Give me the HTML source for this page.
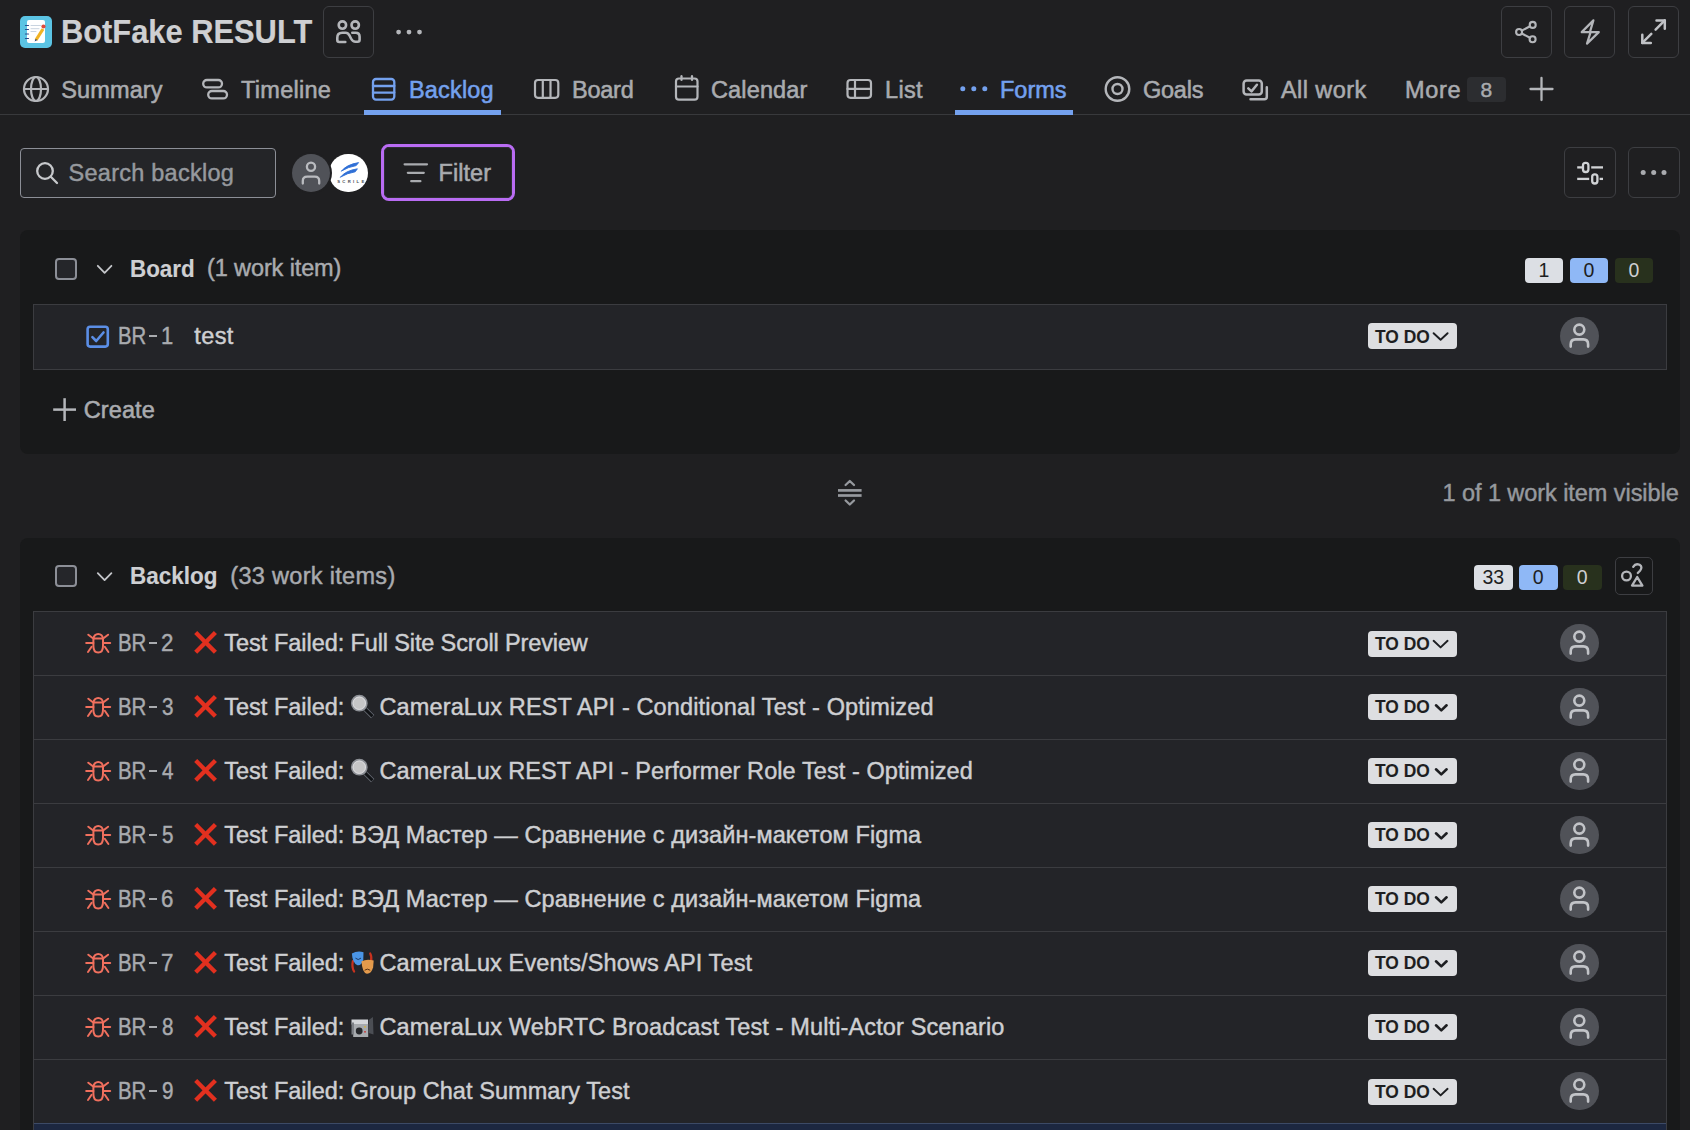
<!DOCTYPE html><html><head><meta charset="utf-8"><style>
html,body{margin:0;padding:0}
body{width:1690px;height:1130px;overflow:hidden;position:relative;background:#1f1f21;font-family:"Liberation Sans",sans-serif}
.t{position:absolute;white-space:nowrap}
.ov{position:absolute;left:0;top:0;overflow:visible}
</style></head><body>
<div style="position:absolute;left:20px;top:16px;width:32px;height:32px;box-sizing:border-box;background:#5bc4e4;border-radius:5px"></div>
<div style="position:absolute;left:27px;top:20px;width:18px;height:23px;box-sizing:border-box;background:#fff;border-radius:2px"></div>
<svg class="ov" width="1690" height="1130" viewBox="0 0 1690 1130" fill="none" stroke="#b4b6ba" stroke-width="1" stroke-linecap="round" stroke-linejoin="round"><g stroke="#2d4a8a" stroke-width="1.2"><line x1="25.5" y1="25.5" x2="28.5" y2="25.5"/><line x1="25.5" y1="29.5" x2="28.5" y2="29.5"/><line x1="25.5" y1="34" x2="28.5" y2="34"/><line x1="25.5" y1="38.5" x2="28.5" y2="38.5"/></g>
<g stroke="#c9d4e0" stroke-width="1"><line x1="31" y1="25.5" x2="41" y2="25.5"/><line x1="31" y1="28.7" x2="39" y2="28.7"/><line x1="31" y1="31.5" x2="36" y2="31.5"/></g>
<line x1="36" y1="40" x2="43" y2="29" stroke="#f2b322" stroke-width="3.2" stroke-linecap="butt"/>
<circle cx="43.5" cy="26.5" r="2.1" fill="#e04b3c" stroke="none"/>
<path d="M34.6 41.5 L35.6 38.9 L37.3 40 Z" fill="#203a70" stroke="none"/></svg>
<div class="t" style="left:61.19px;top:14.42px;font-size:34px;line-height:34px;font-weight:bold;color:#cecfd2;-webkit-text-stroke:0.2px currentColor;transform:scaleX(0.9069);transform-origin:0 0;">BotFake RESULT</div>
<div style="position:absolute;left:323px;top:6px;width:51px;height:52px;box-sizing:border-box;border:1px solid #3d3e42;border-radius:6px"></div>
<svg class="ov" width="1690" height="1130" viewBox="0 0 1690 1130" fill="none" stroke="#b4b6ba" stroke-width="2.6" stroke-linecap="round" stroke-linejoin="round"><circle cx="342.4" cy="25.1" r="3.7"/><circle cx="355.2" cy="25.1" r="3.7"/>
<path d="M345.3 42 H339.3 Q337.3 42 337.3 40 V37.8 Q337.3 32.8 342.3 32.8 H345.6 Q348 32.8 349.5 35.5 L351 38.5 Q352.8 41.8 355.5 41.8 H357.6 Q359.6 41.8 359.6 39.8 V36.8 Q359.6 32.8 355.6 32.8 H352.3"/></svg>
<svg class="ov" width="1690" height="1130" viewBox="0 0 1690 1130" fill="#b4b6ba" stroke="none" stroke-width="2.2" stroke-linecap="round" stroke-linejoin="round"><circle cx="398.6" cy="32.1" r="2.4"/><circle cx="409" cy="32.1" r="2.4"/><circle cx="419.5" cy="32.1" r="2.4"/></svg>
<div style="position:absolute;left:1501px;top:6px;width:51px;height:52px;box-sizing:border-box;border:1px solid #3d3e42;border-radius:6px"></div>
<div style="position:absolute;left:1564px;top:6px;width:51px;height:52px;box-sizing:border-box;border:1px solid #3d3e42;border-radius:6px"></div>
<div style="position:absolute;left:1628px;top:6px;width:51px;height:52px;box-sizing:border-box;border:1px solid #3d3e42;border-radius:6px"></div>
<svg class="ov" width="1690" height="1130" viewBox="0 0 1690 1130" fill="none" stroke="#b4b6ba" stroke-width="2.1" stroke-linecap="round" stroke-linejoin="round"><circle cx="1519.1" cy="32" r="3.0"/><circle cx="1532.7" cy="24.9" r="3.0"/><circle cx="1532.6" cy="39.3" r="3.0"/>
<line x1="1521.8" y1="30.6" x2="1530" y2="26.3"/><line x1="1521.8" y1="33.5" x2="1529.9" y2="37.8"/></svg>
<svg class="ov" width="1690" height="1130" viewBox="0 0 1690 1130" fill="none" stroke="#b4b6ba" stroke-width="2.2" stroke-linecap="round" stroke-linejoin="round"><path d="M1593.4 20.4 L1581.7 32.1 L1590.6 32.1 L1587 43.6 L1598.8 32.1 L1589.9 32.1 Z"/></svg>
<svg class="ov" width="1690" height="1130" viewBox="0 0 1690 1130" fill="none" stroke="#c0c2c6" stroke-width="2.5" stroke-linecap="round" stroke-linejoin="round"><path d="M1656.5 20.4 H1664.8 V28.8"/><line x1="1664.8" y1="20.4" x2="1655.6" y2="29.6"/>
<path d="M1642.3 34.7 V42.9 H1650.8"/><line x1="1642.3" y1="42.9" x2="1651.3" y2="33.9"/></svg>
<div class="t" style="left:61.30px;top:79.31px;font-size:23.5px;line-height:23.5px;font-weight:normal;color:#a9abaf;-webkit-text-stroke:0.55px currentColor;letter-spacing:0.117px;">Summary</div>
<div class="t" style="left:241.00px;top:79.31px;font-size:23.5px;line-height:23.5px;font-weight:normal;color:#a9abaf;-webkit-text-stroke:0.55px currentColor;letter-spacing:0.286px;">Timeline</div>
<div class="t" style="left:409.00px;top:79.31px;font-size:23.5px;line-height:23.5px;font-weight:normal;color:#74a1ee;-webkit-text-stroke:0.55px currentColor;letter-spacing:0.167px;">Backlog</div>
<div class="t" style="left:572.00px;top:79.31px;font-size:23.5px;line-height:23.5px;font-weight:normal;color:#a9abaf;-webkit-text-stroke:0.55px currentColor;letter-spacing:-0.250px;">Board</div>
<div class="t" style="left:711.00px;top:79.31px;font-size:23.5px;line-height:23.5px;font-weight:normal;color:#a9abaf;-webkit-text-stroke:0.55px currentColor;letter-spacing:0.143px;">Calendar</div>
<div class="t" style="left:885.00px;top:79.31px;font-size:23.5px;line-height:23.5px;font-weight:normal;color:#a9abaf;-webkit-text-stroke:0.55px currentColor;letter-spacing:0.333px;">List</div>
<div class="t" style="left:1000.00px;top:79.31px;font-size:23.5px;line-height:23.5px;font-weight:normal;color:#74a1ee;-webkit-text-stroke:0.55px currentColor;letter-spacing:0.000px;">Forms</div>
<div class="t" style="left:1143.00px;top:79.31px;font-size:23.5px;line-height:23.5px;font-weight:normal;color:#a9abaf;-webkit-text-stroke:0.55px currentColor;letter-spacing:-0.250px;">Goals</div>
<div class="t" style="left:1281.00px;top:79.31px;font-size:23.5px;line-height:23.5px;font-weight:normal;color:#a9abaf;-webkit-text-stroke:0.55px currentColor;letter-spacing:0.429px;">All work</div>
<div class="t" style="left:1405.00px;top:79.31px;font-size:23.5px;line-height:23.5px;font-weight:normal;color:#a9abaf;-webkit-text-stroke:0.55px currentColor;letter-spacing:0.667px;">More</div>
<svg class="ov" width="1690" height="1130" viewBox="0 0 1690 1130" fill="none" stroke="#b4b6ba" stroke-width="2.2" stroke-linecap="round" stroke-linejoin="round"><circle cx="36" cy="89" r="12"/><ellipse cx="36" cy="89" rx="5" ry="12"/><line x1="24" y1="89" x2="48" y2="89"/></svg>
<svg class="ov" width="1690" height="1130" viewBox="0 0 1690 1130" fill="none" stroke="#b4b6ba" stroke-width="2.3" stroke-linecap="round" stroke-linejoin="round"><rect x="203.2" y="80" width="18.8" height="7.4" rx="3.7"/><rect x="208.2" y="91" width="18.8" height="7.4" rx="3.7"/></svg>
<svg class="ov" width="1690" height="1130" viewBox="0 0 1690 1130" fill="none" stroke="#74a1ee" stroke-width="2.3" stroke-linecap="round" stroke-linejoin="round"><rect x="373" y="79" width="21.3" height="20.6" rx="3"/><line x1="373" y1="86" x2="394.3" y2="86"/><line x1="373" y1="92.6" x2="394.3" y2="92.6"/></svg>
<svg class="ov" width="1690" height="1130" viewBox="0 0 1690 1130" fill="none" stroke="#b4b6ba" stroke-width="2.2" stroke-linecap="round" stroke-linejoin="round"><rect x="535" y="80" width="23.3" height="17.8" rx="3"/><line x1="542.8" y1="80" x2="542.8" y2="97.8"/><line x1="550.5" y1="80" x2="550.5" y2="97.8"/></svg>
<svg class="ov" width="1690" height="1130" viewBox="0 0 1690 1130" fill="none" stroke="#b4b6ba" stroke-width="2.2" stroke-linecap="round" stroke-linejoin="round"><rect x="676" y="78.5" width="21.5" height="21.2" rx="3"/><line x1="676" y1="86.5" x2="697.5" y2="86.5"/><line x1="681.5" y1="76.2" x2="681.5" y2="80"/><line x1="692" y1="76.2" x2="692" y2="80"/></svg>
<svg class="ov" width="1690" height="1130" viewBox="0 0 1690 1130" fill="none" stroke="#b4b6ba" stroke-width="2.2" stroke-linecap="round" stroke-linejoin="round"><rect x="847.5" y="80" width="23.5" height="17.8" rx="3"/><line x1="847.5" y1="88.9" x2="871" y2="88.9"/><line x1="855" y1="80" x2="855" y2="97.8"/></svg>
<svg class="ov" width="1690" height="1130" viewBox="0 0 1690 1130" fill="#74a1ee" stroke="none" stroke-width="2.2" stroke-linecap="round" stroke-linejoin="round"><circle cx="962.8" cy="88.8" r="2.5"/><circle cx="973.8" cy="88.8" r="2.5"/><circle cx="984.8" cy="88.8" r="2.5"/></svg>
<svg class="ov" width="1690" height="1130" viewBox="0 0 1690 1130" fill="none" stroke="#b4b6ba" stroke-width="2.4" stroke-linecap="round" stroke-linejoin="round"><circle cx="1117.5" cy="89" r="11.8"/><circle cx="1117.5" cy="89" r="5"/></svg>
<svg class="ov" width="1690" height="1130" viewBox="0 0 1690 1130" fill="none" stroke="#b4b6ba" stroke-width="2.5" stroke-linecap="round" stroke-linejoin="round"><rect x="1243.6" y="80.5" width="18.2" height="14" rx="3"/><path d="M1248.3 88.3 L1251.5 91.4 L1256.9 84.8"/><path d="M1266.8 87.2 V96.8 Q1266.8 99.3 1264.3 99.3 H1250.5"/></svg>
<div style="position:absolute;left:1467px;top:77px;width:39px;height:25px;box-sizing:border-box;background:#2c2d30;border-radius:4px"></div>
<div class="t" style="left:1480.40px;top:79.42px;font-size:21px;line-height:21px;font-weight:normal;color:#a9abaf;-webkit-text-stroke:0.45px currentColor;">8</div>
<svg class="ov" width="1690" height="1130" viewBox="0 0 1690 1130" fill="none" stroke="#b4b6ba" stroke-width="2.3" stroke-linecap="round" stroke-linejoin="round"><line x1="1541.5" y1="78" x2="1541.5" y2="100"/><line x1="1530.5" y1="89" x2="1552.5" y2="89"/></svg>
<div style="position:absolute;left:0px;top:114px;width:1690px;height:1px;box-sizing:border-box;background:#38393c"></div>
<div style="position:absolute;left:364px;top:110px;width:137px;height:5px;box-sizing:border-box;background:#74a1ee"></div>
<div style="position:absolute;left:955px;top:110px;width:118px;height:5px;box-sizing:border-box;background:#74a1ee"></div>
<div style="position:absolute;left:20px;top:148px;width:256px;height:50px;box-sizing:border-box;background:#242528;border:1px solid #8c8f97;border-radius:4px"></div>
<svg class="ov" width="1690" height="1130" viewBox="0 0 1690 1130" fill="none" stroke="#c7c9cc" stroke-width="2.3" stroke-linecap="round" stroke-linejoin="round"><circle cx="45" cy="171" r="7.8"/><line x1="50.8" y1="176.8" x2="57" y2="183"/></svg>
<div class="t" style="left:68.60px;top:162.11px;font-size:23.5px;line-height:23.5px;font-weight:normal;color:#96999e;-webkit-text-stroke:0.45px currentColor;letter-spacing:0.246px;">Search backlog</div>
<div style="position:absolute;left:329.35px;top:153.5px;width:38.5px;height:38.5px;border-radius:50%;background:#fff"></div>
<svg class="ov" width="1690" height="1130" viewBox="0 0 1690 1130" fill="none" stroke="#b4b6ba" stroke-width="1" stroke-linecap="round" stroke-linejoin="round"><path d="M341.6 170.9 Q346.5 164.6 358.6 162.6 L356.2 165.6 Q348.5 166.8 341.6 170.9 Z" fill="#2f6fd6" stroke="#2f6fd6" stroke-width="0.9"/>
<path d="M340.6 177 Q345.6 170.6 357.4 168.8 L355.2 171.8 Q347.5 173 340.6 177 Z" fill="#2f6fd6" stroke="#2f6fd6" stroke-width="0.9"/></svg>
<div style="position:absolute;left:337.2px;top:179.6px;font-family:'Liberation Sans';font-size:4.2px;line-height:4px;letter-spacing:2.35px;color:#4a4d55;font-weight:bold;white-space:nowrap">SCRILE</div>
<div style="position:absolute;left:289.8px;top:151.5px;width:42.5px;height:42.5px;border-radius:50%;background:#1f1f21"></div>
<div style="position:absolute;left:291.8px;top:153.5px;width:38.5px;height:38.5px;border-radius:50%;background:#505258"></div>
<svg class="ov" width="1690" height="1130" viewBox="0 0 1690 1130" fill="none" stroke="#b9bbbf" stroke-width="2.3" stroke-linecap="round" stroke-linejoin="round"><circle cx="311" cy="166.8" r="4.1"/><path d="M302.8 183.6 V181 Q302.8 176.6 307.2 176.6 H314.8 Q319.2 176.6 319.2 181 V183.6"/></svg>
<div style="position:absolute;left:381px;top:144px;width:134px;height:57px;box-sizing:border-box;border:3px solid #b96cf3;border-radius:8px"></div>
<div style="position:absolute;left:384px;top:147px;width:128px;height:51px;box-sizing:border-box;border:1px solid #2e2f33;border-radius:5px"></div>
<svg class="ov" width="1690" height="1130" viewBox="0 0 1690 1130" fill="none" stroke="#a9abaf" stroke-width="2.2" stroke-linecap="round" stroke-linejoin="round"><line x1="404.6" y1="164.3" x2="427" y2="164.3"/><line x1="407.8" y1="172.8" x2="423.8" y2="172.8"/><line x1="411.2" y1="181.2" x2="420.4" y2="181.2"/></svg>
<div class="t" style="left:438.50px;top:162.11px;font-size:23.5px;line-height:23.5px;font-weight:normal;color:#a9abaf;-webkit-text-stroke:0.55px currentColor;letter-spacing:0.060px;">Filter</div>
<div style="position:absolute;left:1564px;top:147px;width:52px;height:51px;box-sizing:border-box;border:1px solid #3d3e42;border-radius:6px"></div>
<div style="position:absolute;left:1628px;top:147px;width:52px;height:51px;box-sizing:border-box;border:1px solid #3d3e42;border-radius:6px"></div>
<svg class="ov" width="1690" height="1130" viewBox="0 0 1690 1130" fill="none" stroke="#d0d2d5" stroke-width="2.3" stroke-linecap="round" stroke-linejoin="round"><line x1="1577.2" y1="167.4" x2="1582.6" y2="167.4" stroke-linecap="butt"/><line x1="1591.2" y1="167.4" x2="1603" y2="167.4" stroke-linecap="butt"/><rect x="1583" y="162.8" width="5.4" height="9.2" rx="2.5"/>
<line x1="1577.2" y1="178.9" x2="1589.2" y2="178.9" stroke-linecap="butt"/><line x1="1599.6" y1="178.9" x2="1603" y2="178.9" stroke-linecap="butt"/><rect x="1592.2" y="174.3" width="5.2" height="9.2" rx="2.5"/></svg>
<svg class="ov" width="1690" height="1130" viewBox="0 0 1690 1130" fill="#a9abaf" stroke="none" stroke-width="2.2" stroke-linecap="round" stroke-linejoin="round"><circle cx="1643.2" cy="172.5" r="2.5"/><circle cx="1653.7" cy="172.5" r="2.5"/><circle cx="1664" cy="172.5" r="2.5"/></svg>
<div style="position:absolute;left:20px;top:230px;width:1660px;height:224px;box-sizing:border-box;background:#18191a;border-radius:8px"></div>
<div style="position:absolute;left:55px;top:258px;width:22px;height:22px;box-sizing:border-box;background:#25262a;border:2px solid #8c8f97;border-radius:4px"></div>
<svg class="ov" width="1690" height="1130" viewBox="0 0 1690 1130" fill="none" stroke="#c4c6ca" stroke-width="1.8" stroke-linecap="round" stroke-linejoin="round"><path d="M97.8 265.8 L104.6 272.8 L111.4 265.8"/></svg>
<div class="t" style="left:129.54px;top:257.88px;font-size:23.3px;line-height:23.3px;font-weight:bold;color:#cecfd2;-webkit-text-stroke:0.15px currentColor;transform:scaleX(0.9615);transform-origin:0 0;">Board</div>
<div class="t" style="left:207.00px;top:257.31px;font-size:23.5px;line-height:23.5px;font-weight:normal;color:#a9abaf;-webkit-text-stroke:0.45px currentColor;letter-spacing:-0.117px;">(1 work item)</div>
<div style="position:absolute;left:1525px;top:258px;width:38px;height:25px;box-sizing:border-box;background:#dcdfe4;border-radius:4px"></div>
<div class="t" style="left:1525px;top:258px;width:38px;height:25px;line-height:25px;text-align:center;font-size:19.5px;color:#1d1e21">1</div>
<div style="position:absolute;left:1570px;top:258px;width:38px;height:25px;box-sizing:border-box;background:#8fb8f6;border-radius:4px"></div>
<div class="t" style="left:1570px;top:258px;width:38px;height:25px;line-height:25px;text-align:center;font-size:19.5px;color:#1d1e21">0</div>
<div style="position:absolute;left:1615px;top:258px;width:38px;height:25px;box-sizing:border-box;background:#28311d;border-radius:4px"></div>
<div class="t" style="left:1615px;top:258px;width:38px;height:25px;line-height:25px;text-align:center;font-size:19.5px;color:#cecfd2">0</div>
<div style="position:absolute;left:33px;top:304px;width:1634px;height:66px;box-sizing:border-box;background:#232428;border:1px solid #3b3c40"></div>
<svg class="ov" width="1690" height="1130" viewBox="0 0 1690 1130" fill="none" stroke="#5b8ee6" stroke-width="2.6" stroke-linecap="round" stroke-linejoin="round"><rect x="87.6" y="326.8" width="20.2" height="19.8" rx="2.5"/><path d="M92.4 337.2 L96.2 341 L103.5 332.5"/></svg>
<div class="t" style="left:117.89px;top:325.11px;font-size:23.5px;line-height:23.5px;font-weight:normal;color:#a9abaf;-webkit-text-stroke:0.45px currentColor;transform:scaleX(0.8629);transform-origin:0 0;">BR</div>
<div style="position:absolute;left:149px;top:334.7px;width:8px;height:2.5px;box-sizing:border-box;background:#a9abaf"></div>
<div class="t" style="left:161.27px;top:325.11px;font-size:23.5px;line-height:23.5px;font-weight:normal;color:#a9abaf;-webkit-text-stroke:0.45px currentColor;transform:scaleX(0.9333);transform-origin:0 0;">1</div>
<div class="t" style="left:194.30px;top:325.11px;font-size:23.5px;line-height:23.5px;font-weight:normal;color:#cecfd2;-webkit-text-stroke:0.45px currentColor;letter-spacing:0.367px;">test</div>
<div style="position:absolute;left:1368px;top:323.2px;width:89px;height:25.8px;box-sizing:border-box;background:#dddee1;border-radius:4px"></div>
<div class="t" style="left:1375.20px;top:327.68px;font-size:18.1px;line-height:18.1px;font-weight:bold;color:#1d1e21;-webkit-text-stroke:0.1px currentColor;transform:scaleX(0.9614);transform-origin:0 0;">TO DO</div>
<svg class="ov" width="1690" height="1130" viewBox="0 0 1690 1130" fill="none" stroke="#1d1e21" stroke-width="1.9" stroke-linecap="round" stroke-linejoin="round"><path d="M1433.6 333.2 L1440.6 339.8 L1447.6 333.2"/></svg>
<div style="position:absolute;left:1560.3px;top:316.8px;width:38.4px;height:38.4px;box-sizing:border-box;background:#505258;border-radius:50%"></div>
<svg class="ov" width="1690" height="1130" viewBox="0 0 1690 1130" fill="none" stroke="#c2c4c8" stroke-width="2.6" stroke-linecap="round" stroke-linejoin="round"><circle cx="1579.3" cy="329.6" r="5"/><path d="M1570.7 346.6 V344.2 Q1570.7 339.4 1575.5 339.4 H1583.3 Q1588.1 339.4 1588.1 344.2 V346.6"/></svg>
<svg class="ov" width="1690" height="1130" viewBox="0 0 1690 1130" fill="none" stroke="#b4b6ba" stroke-width="2.5" stroke-linecap="round" stroke-linejoin="round"><line x1="64.6" y1="398.2" x2="64.6" y2="421" stroke-linecap="butt"/><line x1="53.2" y1="409.6" x2="76" y2="409.6" stroke-linecap="butt"/></svg>
<div class="t" style="left:83.70px;top:399.11px;font-size:23.5px;line-height:23.5px;font-weight:normal;color:#a9abaf;-webkit-text-stroke:0.55px currentColor;letter-spacing:0.120px;">Create</div>
<svg class="ov" width="1690" height="1130" viewBox="0 0 1690 1130" fill="none" stroke="#96999e" stroke-width="2.7" stroke-linecap="round" stroke-linejoin="round"><line x1="838" y1="490.4" x2="861.6" y2="490.4" stroke-linecap="butt"/><line x1="838" y1="495.5" x2="861.6" y2="495.5" stroke-linecap="butt"/><path d="M845.6 485 L849.8 481 L854 485" stroke-width="2.3"/><path d="M845.6 500.5 L849.8 504.5 L854 500.5" stroke-width="2.3"/></svg>
<div class="t" style="left:1442.50px;top:481.91px;font-size:23.5px;line-height:23.5px;font-weight:normal;color:#96999e;-webkit-text-stroke:0.45px currentColor;letter-spacing:-0.065px;">1 of 1 work item visible</div>
<div style="position:absolute;left:20px;top:538px;width:1660px;height:700px;box-sizing:border-box;background:#18191a;border-radius:8px"></div>
<div style="position:absolute;left:55px;top:565.3px;width:22px;height:22px;box-sizing:border-box;background:#25262a;border:2px solid #8c8f97;border-radius:4px"></div>
<svg class="ov" width="1690" height="1130" viewBox="0 0 1690 1130" fill="none" stroke="#c4c6ca" stroke-width="1.8" stroke-linecap="round" stroke-linejoin="round"><path d="M97.8 573.0999999999999 L104.6 580.0999999999999 L111.4 573.0999999999999"/></svg>
<div class="t" style="left:129.73px;top:565.18px;font-size:23.3px;line-height:23.3px;font-weight:bold;color:#cecfd2;-webkit-text-stroke:0.15px currentColor;transform:scaleX(0.9652);transform-origin:0 0;">Backlog</div>
<div class="t" style="left:230.30px;top:564.61px;font-size:23.5px;line-height:23.5px;font-weight:normal;color:#a9abaf;-webkit-text-stroke:0.45px currentColor;letter-spacing:0.307px;">(33 work items)</div>
<div style="position:absolute;left:1474px;top:565px;width:38.5px;height:25px;box-sizing:border-box;background:#dcdfe4;border-radius:4px"></div>
<div class="t" style="left:1474px;top:565px;width:38.5px;height:25px;line-height:25px;text-align:center;font-size:19.5px;color:#1d1e21">33</div>
<div style="position:absolute;left:1519px;top:565px;width:38.5px;height:25px;box-sizing:border-box;background:#8fb8f6;border-radius:4px"></div>
<div class="t" style="left:1519px;top:565px;width:38.5px;height:25px;line-height:25px;text-align:center;font-size:19.5px;color:#1d1e21">0</div>
<div style="position:absolute;left:1563px;top:565px;width:38.5px;height:25px;box-sizing:border-box;background:#28311d;border-radius:4px"></div>
<div class="t" style="left:1563px;top:565px;width:38.5px;height:25px;line-height:25px;text-align:center;font-size:19.5px;color:#cecfd2">0</div>
<div style="position:absolute;left:1615px;top:557px;width:38px;height:38px;box-sizing:border-box;border:1px solid #3d3e42;border-radius:5px"></div>
<svg class="ov" width="1690" height="1130" viewBox="0 0 1690 1130" fill="none" stroke="#b4b6ba" stroke-width="2.3" stroke-linecap="round" stroke-linejoin="round"><circle cx="1626.5" cy="576" r="4.4"/><path d="M1633.2 566.8 Q1635.5 563 1639.6 564.8 Q1643 567 1640 570.8 L1637.8 573"/><path d="M1637.2 577 L1642.4 585.6 H1632 Z"/></svg>
<div style="position:absolute;left:33px;top:611px;width:1634px;height:700px;box-sizing:border-box;background:#232428;border-left:1px solid #3b3c40;border-right:1px solid #3b3c40;border-top:1px solid #3b3c40"></div>
<svg class="ov" width="1690" height="1130" viewBox="0 0 1690 1130" fill="none" stroke="#f0705e" stroke-width="2.0" stroke-linecap="round" stroke-linejoin="round"><path d="M93.4 638.5 V646 C93.4 650.5 95.5 652.6 98.2 652.6 C100.9 652.6 103 650.5 103 646 V638.5 Z"/>
<path d="M93.6 638.5 A4.6 4.6 0 0 1 102.8 638.5"/>
<line x1="86.2" y1="643" x2="93.4" y2="643"/><line x1="103" y1="643" x2="110.2" y2="643"/>
<line x1="88.3" y1="634.7" x2="92.6" y2="638"/><line x1="108.1" y1="634.7" x2="103.8" y2="638"/>
<line x1="91.6" y1="646.8" x2="88" y2="652"/><line x1="104.8" y1="646.8" x2="108.4" y2="652"/></svg>
<div class="t" style="left:117.73px;top:632.11px;font-size:23.5px;line-height:23.5px;font-weight:normal;color:#a9abaf;-webkit-text-stroke:0.45px currentColor;transform:scaleX(0.8677);transform-origin:0 0;">BR</div>
<div style="position:absolute;left:149px;top:641.7px;width:8px;height:2.5px;box-sizing:border-box;background:#a9abaf"></div>
<div class="t" style="left:161.25px;top:632.11px;font-size:23.5px;line-height:23.5px;font-weight:normal;color:#a9abaf;-webkit-text-stroke:0.45px currentColor;transform:scaleX(0.9500);transform-origin:0 0;">2</div>
<svg class="ov" width="1690" height="1130" viewBox="0 0 1690 1130" fill="none" stroke="#e2301f" stroke-width="4.3" stroke-linecap="butt"><line x1="195.7" y1="632.5" x2="215.4" y2="652.3"/><line x1="215.4" y1="632.5" x2="195.7" y2="652.3"/></svg>
<div class="t" style="left:224.30px;top:632.11px;font-size:23.5px;line-height:23.5px;font-weight:normal;color:#cecfd2;-webkit-text-stroke:0.45px currentColor;letter-spacing:-0.009px;">Test Failed:</div>
<div class="t" style="left:350.50px;top:632.11px;font-size:23.5px;line-height:23.5px;font-weight:normal;color:#cecfd2;-webkit-text-stroke:0.45px currentColor;letter-spacing:-0.130px;">Full Site Scroll Preview</div>
<div style="position:absolute;left:1368px;top:630.8000000000001px;width:89px;height:25.8px;box-sizing:border-box;background:#dddee1;border-radius:4px"></div>
<div class="t" style="left:1375.20px;top:635.28px;font-size:18.1px;line-height:18.1px;font-weight:bold;color:#1d1e21;-webkit-text-stroke:0.1px currentColor;transform:scaleX(0.9614);transform-origin:0 0;">TO DO</div>
<svg class="ov" width="1690" height="1130" viewBox="0 0 1690 1130" fill="none" stroke="#1d1e21" stroke-width="1.9" stroke-linecap="round" stroke-linejoin="round"><path d="M1433.6 640.8000000000001 L1440.6 647.4 L1447.6 640.8000000000001"/></svg>
<div style="position:absolute;left:1560.3px;top:623.8px;width:38.4px;height:38.4px;box-sizing:border-box;background:#505258;border-radius:50%"></div>
<svg class="ov" width="1690" height="1130" viewBox="0 0 1690 1130" fill="none" stroke="#c2c4c8" stroke-width="2.6" stroke-linecap="round" stroke-linejoin="round"><circle cx="1579.3" cy="636.6" r="5"/><path d="M1570.7 653.6 V651.2 Q1570.7 646.4 1575.5 646.4 H1583.3 Q1588.1 646.4 1588.1 651.2 V653.6"/></svg>
<div style="position:absolute;left:34px;top:675px;width:1632px;height:1px;box-sizing:border-box;background:#3b3c40"></div>
<svg class="ov" width="1690" height="1130" viewBox="0 0 1690 1130" fill="none" stroke="#f0705e" stroke-width="2.0" stroke-linecap="round" stroke-linejoin="round"><path d="M93.4 702.5 V710 C93.4 714.5 95.5 716.6 98.2 716.6 C100.9 716.6 103 714.5 103 710 V702.5 Z"/>
<path d="M93.6 702.5 A4.6 4.6 0 0 1 102.8 702.5"/>
<line x1="86.2" y1="707" x2="93.4" y2="707"/><line x1="103" y1="707" x2="110.2" y2="707"/>
<line x1="88.3" y1="698.7" x2="92.6" y2="702"/><line x1="108.1" y1="698.7" x2="103.8" y2="702"/>
<line x1="91.6" y1="710.8" x2="88" y2="716"/><line x1="104.8" y1="710.8" x2="108.4" y2="716"/></svg>
<div class="t" style="left:117.73px;top:696.11px;font-size:23.5px;line-height:23.5px;font-weight:normal;color:#a9abaf;-webkit-text-stroke:0.45px currentColor;transform:scaleX(0.8677);transform-origin:0 0;">BR</div>
<div style="position:absolute;left:149px;top:705.7px;width:8px;height:2.5px;box-sizing:border-box;background:#a9abaf"></div>
<div class="t" style="left:162.20px;top:696.11px;font-size:23.5px;line-height:23.5px;font-weight:normal;color:#a9abaf;-webkit-text-stroke:0.45px currentColor;transform:scaleX(0.8769);transform-origin:0 0;">3</div>
<svg class="ov" width="1690" height="1130" viewBox="0 0 1690 1130" fill="none" stroke="#e2301f" stroke-width="4.3" stroke-linecap="butt"><line x1="195.7" y1="696.5" x2="215.4" y2="716.3"/><line x1="215.4" y1="696.5" x2="195.7" y2="716.3"/></svg>
<div class="t" style="left:224.30px;top:696.11px;font-size:23.5px;line-height:23.5px;font-weight:normal;color:#cecfd2;-webkit-text-stroke:0.45px currentColor;letter-spacing:-0.009px;">Test Failed:</div>
<svg class="ov" width="1690" height="1130" viewBox="0 0 1690 1130" fill="none" stroke="#b4b6ba" stroke-width="1" stroke-linecap="round" stroke-linejoin="round"><line x1="364.9" y1="708.8" x2="372.7" y2="716.6" stroke="#6b7078" stroke-width="4.6" stroke-linecap="butt"/><line x1="365.2" y1="709.1" x2="372.5" y2="716.4" stroke="#111316" stroke-width="3.0" stroke-linecap="butt"/><circle cx="359.3" cy="703.2" r="7.6" fill="#c6c6c7" stroke="#8d9096" stroke-width="1.6"/><circle cx="359.3" cy="703.2" r="6.2" fill="none" stroke="#dcdde0" stroke-width="0.9"/></svg>
<div class="t" style="left:379.50px;top:696.11px;font-size:23.5px;line-height:23.5px;font-weight:normal;color:#cecfd2;-webkit-text-stroke:0.45px currentColor;letter-spacing:0.131px;">CameraLux REST API - Conditional Test - Optimized</div>
<div style="position:absolute;left:1368px;top:694.0px;width:89px;height:25.8px;box-sizing:border-box;background:#dddee1;border-radius:4px"></div>
<div class="t" style="left:1375.20px;top:698.48px;font-size:18.1px;line-height:18.1px;font-weight:bold;color:#1d1e21;-webkit-text-stroke:0.1px currentColor;transform:scaleX(0.9614);transform-origin:0 0;">TO DO</div>
<svg class="ov" width="1690" height="1130" viewBox="0 0 1690 1130" fill="none" stroke="#1d1e21" stroke-width="2.6" stroke-linecap="round" stroke-linejoin="round"><path d="M1436 705.3 L1441.3 710.4 L1446.6 705.3"/></svg>
<div style="position:absolute;left:1560.3px;top:687.8px;width:38.4px;height:38.4px;box-sizing:border-box;background:#505258;border-radius:50%"></div>
<svg class="ov" width="1690" height="1130" viewBox="0 0 1690 1130" fill="none" stroke="#c2c4c8" stroke-width="2.6" stroke-linecap="round" stroke-linejoin="round"><circle cx="1579.3" cy="700.6" r="5"/><path d="M1570.7 717.6 V715.2 Q1570.7 710.4 1575.5 710.4 H1583.3 Q1588.1 710.4 1588.1 715.2 V717.6"/></svg>
<div style="position:absolute;left:34px;top:739px;width:1632px;height:1px;box-sizing:border-box;background:#3b3c40"></div>
<svg class="ov" width="1690" height="1130" viewBox="0 0 1690 1130" fill="none" stroke="#f0705e" stroke-width="2.0" stroke-linecap="round" stroke-linejoin="round"><path d="M93.4 766.5 V774 C93.4 778.5 95.5 780.6 98.2 780.6 C100.9 780.6 103 778.5 103 774 V766.5 Z"/>
<path d="M93.6 766.5 A4.6 4.6 0 0 1 102.8 766.5"/>
<line x1="86.2" y1="771" x2="93.4" y2="771"/><line x1="103" y1="771" x2="110.2" y2="771"/>
<line x1="88.3" y1="762.7" x2="92.6" y2="766"/><line x1="108.1" y1="762.7" x2="103.8" y2="766"/>
<line x1="91.6" y1="774.8" x2="88" y2="780"/><line x1="104.8" y1="774.8" x2="108.4" y2="780"/></svg>
<div class="t" style="left:117.73px;top:760.11px;font-size:23.5px;line-height:23.5px;font-weight:normal;color:#a9abaf;-webkit-text-stroke:0.45px currentColor;transform:scaleX(0.8677);transform-origin:0 0;">BR</div>
<div style="position:absolute;left:149px;top:769.7px;width:8px;height:2.5px;box-sizing:border-box;background:#a9abaf"></div>
<div class="t" style="left:162.20px;top:760.11px;font-size:23.5px;line-height:23.5px;font-weight:normal;color:#a9abaf;-webkit-text-stroke:0.45px currentColor;transform:scaleX(0.8769);transform-origin:0 0;">4</div>
<svg class="ov" width="1690" height="1130" viewBox="0 0 1690 1130" fill="none" stroke="#e2301f" stroke-width="4.3" stroke-linecap="butt"><line x1="195.7" y1="760.5" x2="215.4" y2="780.3"/><line x1="215.4" y1="760.5" x2="195.7" y2="780.3"/></svg>
<div class="t" style="left:224.30px;top:760.11px;font-size:23.5px;line-height:23.5px;font-weight:normal;color:#cecfd2;-webkit-text-stroke:0.45px currentColor;letter-spacing:-0.009px;">Test Failed:</div>
<svg class="ov" width="1690" height="1130" viewBox="0 0 1690 1130" fill="none" stroke="#b4b6ba" stroke-width="1" stroke-linecap="round" stroke-linejoin="round"><line x1="364.9" y1="772.8" x2="372.7" y2="780.6" stroke="#6b7078" stroke-width="4.6" stroke-linecap="butt"/><line x1="365.2" y1="773.1" x2="372.5" y2="780.4" stroke="#111316" stroke-width="3.0" stroke-linecap="butt"/><circle cx="359.3" cy="767.2" r="7.6" fill="#c6c6c7" stroke="#8d9096" stroke-width="1.6"/><circle cx="359.3" cy="767.2" r="6.2" fill="none" stroke="#dcdde0" stroke-width="0.9"/></svg>
<div class="t" style="left:379.50px;top:760.11px;font-size:23.5px;line-height:23.5px;font-weight:normal;color:#cecfd2;-webkit-text-stroke:0.45px currentColor;letter-spacing:0.076px;">CameraLux REST API - Performer Role Test - Optimized</div>
<div style="position:absolute;left:1368px;top:758.0px;width:89px;height:25.8px;box-sizing:border-box;background:#dddee1;border-radius:4px"></div>
<div class="t" style="left:1375.20px;top:762.48px;font-size:18.1px;line-height:18.1px;font-weight:bold;color:#1d1e21;-webkit-text-stroke:0.1px currentColor;transform:scaleX(0.9614);transform-origin:0 0;">TO DO</div>
<svg class="ov" width="1690" height="1130" viewBox="0 0 1690 1130" fill="none" stroke="#1d1e21" stroke-width="2.6" stroke-linecap="round" stroke-linejoin="round"><path d="M1436 769.3 L1441.3 774.4 L1446.6 769.3"/></svg>
<div style="position:absolute;left:1560.3px;top:751.8px;width:38.4px;height:38.4px;box-sizing:border-box;background:#505258;border-radius:50%"></div>
<svg class="ov" width="1690" height="1130" viewBox="0 0 1690 1130" fill="none" stroke="#c2c4c8" stroke-width="2.6" stroke-linecap="round" stroke-linejoin="round"><circle cx="1579.3" cy="764.6" r="5"/><path d="M1570.7 781.6 V779.2 Q1570.7 774.4 1575.5 774.4 H1583.3 Q1588.1 774.4 1588.1 779.2 V781.6"/></svg>
<div style="position:absolute;left:34px;top:803px;width:1632px;height:1px;box-sizing:border-box;background:#3b3c40"></div>
<svg class="ov" width="1690" height="1130" viewBox="0 0 1690 1130" fill="none" stroke="#f0705e" stroke-width="2.0" stroke-linecap="round" stroke-linejoin="round"><path d="M93.4 830.5 V838 C93.4 842.5 95.5 844.6 98.2 844.6 C100.9 844.6 103 842.5 103 838 V830.5 Z"/>
<path d="M93.6 830.5 A4.6 4.6 0 0 1 102.8 830.5"/>
<line x1="86.2" y1="835" x2="93.4" y2="835"/><line x1="103" y1="835" x2="110.2" y2="835"/>
<line x1="88.3" y1="826.7" x2="92.6" y2="830"/><line x1="108.1" y1="826.7" x2="103.8" y2="830"/>
<line x1="91.6" y1="838.8" x2="88" y2="844"/><line x1="104.8" y1="838.8" x2="108.4" y2="844"/></svg>
<div class="t" style="left:117.73px;top:824.11px;font-size:23.5px;line-height:23.5px;font-weight:normal;color:#a9abaf;-webkit-text-stroke:0.45px currentColor;transform:scaleX(0.8677);transform-origin:0 0;">BR</div>
<div style="position:absolute;left:149px;top:833.7px;width:8px;height:2.5px;box-sizing:border-box;background:#a9abaf"></div>
<div class="t" style="left:162.20px;top:824.11px;font-size:23.5px;line-height:23.5px;font-weight:normal;color:#a9abaf;-webkit-text-stroke:0.45px currentColor;transform:scaleX(0.8769);transform-origin:0 0;">5</div>
<svg class="ov" width="1690" height="1130" viewBox="0 0 1690 1130" fill="none" stroke="#e2301f" stroke-width="4.3" stroke-linecap="butt"><line x1="195.7" y1="824.5" x2="215.4" y2="844.3"/><line x1="215.4" y1="824.5" x2="195.7" y2="844.3"/></svg>
<div class="t" style="left:224.30px;top:824.11px;font-size:23.5px;line-height:23.5px;font-weight:normal;color:#cecfd2;-webkit-text-stroke:0.45px currentColor;letter-spacing:-0.009px;">Test Failed:</div>
<div class="t" style="left:351.20px;top:824.11px;font-size:23.5px;line-height:23.5px;font-weight:normal;color:#cecfd2;-webkit-text-stroke:0.45px currentColor;letter-spacing:0.091px;">ВЭД Мастер — Сравнение с дизайн-макетом Figma</div>
<div style="position:absolute;left:1368px;top:822.0px;width:89px;height:25.8px;box-sizing:border-box;background:#dddee1;border-radius:4px"></div>
<div class="t" style="left:1375.20px;top:826.48px;font-size:18.1px;line-height:18.1px;font-weight:bold;color:#1d1e21;-webkit-text-stroke:0.1px currentColor;transform:scaleX(0.9614);transform-origin:0 0;">TO DO</div>
<svg class="ov" width="1690" height="1130" viewBox="0 0 1690 1130" fill="none" stroke="#1d1e21" stroke-width="2.6" stroke-linecap="round" stroke-linejoin="round"><path d="M1436 833.3 L1441.3 838.4 L1446.6 833.3"/></svg>
<div style="position:absolute;left:1560.3px;top:815.8px;width:38.4px;height:38.4px;box-sizing:border-box;background:#505258;border-radius:50%"></div>
<svg class="ov" width="1690" height="1130" viewBox="0 0 1690 1130" fill="none" stroke="#c2c4c8" stroke-width="2.6" stroke-linecap="round" stroke-linejoin="round"><circle cx="1579.3" cy="828.6" r="5"/><path d="M1570.7 845.6 V843.2 Q1570.7 838.4 1575.5 838.4 H1583.3 Q1588.1 838.4 1588.1 843.2 V845.6"/></svg>
<div style="position:absolute;left:34px;top:867px;width:1632px;height:1px;box-sizing:border-box;background:#3b3c40"></div>
<svg class="ov" width="1690" height="1130" viewBox="0 0 1690 1130" fill="none" stroke="#f0705e" stroke-width="2.0" stroke-linecap="round" stroke-linejoin="round"><path d="M93.4 894.5 V902 C93.4 906.5 95.5 908.6 98.2 908.6 C100.9 908.6 103 906.5 103 902 V894.5 Z"/>
<path d="M93.6 894.5 A4.6 4.6 0 0 1 102.8 894.5"/>
<line x1="86.2" y1="899" x2="93.4" y2="899"/><line x1="103" y1="899" x2="110.2" y2="899"/>
<line x1="88.3" y1="890.7" x2="92.6" y2="894"/><line x1="108.1" y1="890.7" x2="103.8" y2="894"/>
<line x1="91.6" y1="902.8" x2="88" y2="908"/><line x1="104.8" y1="902.8" x2="108.4" y2="908"/></svg>
<div class="t" style="left:117.73px;top:888.11px;font-size:23.5px;line-height:23.5px;font-weight:normal;color:#a9abaf;-webkit-text-stroke:0.45px currentColor;transform:scaleX(0.8677);transform-origin:0 0;">BR</div>
<div style="position:absolute;left:149px;top:897.7px;width:8px;height:2.5px;box-sizing:border-box;background:#a9abaf"></div>
<div class="t" style="left:161.25px;top:888.11px;font-size:23.5px;line-height:23.5px;font-weight:normal;color:#a9abaf;-webkit-text-stroke:0.45px currentColor;transform:scaleX(0.9500);transform-origin:0 0;">6</div>
<svg class="ov" width="1690" height="1130" viewBox="0 0 1690 1130" fill="none" stroke="#e2301f" stroke-width="4.3" stroke-linecap="butt"><line x1="195.7" y1="888.5" x2="215.4" y2="908.3"/><line x1="215.4" y1="888.5" x2="195.7" y2="908.3"/></svg>
<div class="t" style="left:224.30px;top:888.11px;font-size:23.5px;line-height:23.5px;font-weight:normal;color:#cecfd2;-webkit-text-stroke:0.45px currentColor;letter-spacing:-0.009px;">Test Failed:</div>
<div class="t" style="left:351.20px;top:888.11px;font-size:23.5px;line-height:23.5px;font-weight:normal;color:#cecfd2;-webkit-text-stroke:0.45px currentColor;letter-spacing:0.091px;">ВЭД Мастер — Сравнение с дизайн-макетом Figma</div>
<div style="position:absolute;left:1368px;top:886.0px;width:89px;height:25.8px;box-sizing:border-box;background:#dddee1;border-radius:4px"></div>
<div class="t" style="left:1375.20px;top:890.48px;font-size:18.1px;line-height:18.1px;font-weight:bold;color:#1d1e21;-webkit-text-stroke:0.1px currentColor;transform:scaleX(0.9614);transform-origin:0 0;">TO DO</div>
<svg class="ov" width="1690" height="1130" viewBox="0 0 1690 1130" fill="none" stroke="#1d1e21" stroke-width="2.6" stroke-linecap="round" stroke-linejoin="round"><path d="M1436 897.3 L1441.3 902.4 L1446.6 897.3"/></svg>
<div style="position:absolute;left:1560.3px;top:879.8px;width:38.4px;height:38.4px;box-sizing:border-box;background:#505258;border-radius:50%"></div>
<svg class="ov" width="1690" height="1130" viewBox="0 0 1690 1130" fill="none" stroke="#c2c4c8" stroke-width="2.6" stroke-linecap="round" stroke-linejoin="round"><circle cx="1579.3" cy="892.6" r="5"/><path d="M1570.7 909.6 V907.2 Q1570.7 902.4 1575.5 902.4 H1583.3 Q1588.1 902.4 1588.1 907.2 V909.6"/></svg>
<div style="position:absolute;left:34px;top:931px;width:1632px;height:1px;box-sizing:border-box;background:#3b3c40"></div>
<svg class="ov" width="1690" height="1130" viewBox="0 0 1690 1130" fill="none" stroke="#f0705e" stroke-width="2.0" stroke-linecap="round" stroke-linejoin="round"><path d="M93.4 958.5 V966 C93.4 970.5 95.5 972.6 98.2 972.6 C100.9 972.6 103 970.5 103 966 V958.5 Z"/>
<path d="M93.6 958.5 A4.6 4.6 0 0 1 102.8 958.5"/>
<line x1="86.2" y1="963" x2="93.4" y2="963"/><line x1="103" y1="963" x2="110.2" y2="963"/>
<line x1="88.3" y1="954.7" x2="92.6" y2="958"/><line x1="108.1" y1="954.7" x2="103.8" y2="958"/>
<line x1="91.6" y1="966.8" x2="88" y2="972"/><line x1="104.8" y1="966.8" x2="108.4" y2="972"/></svg>
<div class="t" style="left:117.73px;top:952.11px;font-size:23.5px;line-height:23.5px;font-weight:normal;color:#a9abaf;-webkit-text-stroke:0.45px currentColor;transform:scaleX(0.8677);transform-origin:0 0;">BR</div>
<div style="position:absolute;left:149px;top:961.7px;width:8px;height:2.5px;box-sizing:border-box;background:#a9abaf"></div>
<div class="t" style="left:161.25px;top:952.11px;font-size:23.5px;line-height:23.5px;font-weight:normal;color:#a9abaf;-webkit-text-stroke:0.45px currentColor;transform:scaleX(0.9500);transform-origin:0 0;">7</div>
<svg class="ov" width="1690" height="1130" viewBox="0 0 1690 1130" fill="none" stroke="#e2301f" stroke-width="4.3" stroke-linecap="butt"><line x1="195.7" y1="952.5" x2="215.4" y2="972.3"/><line x1="215.4" y1="952.5" x2="195.7" y2="972.3"/></svg>
<div class="t" style="left:224.30px;top:952.11px;font-size:23.5px;line-height:23.5px;font-weight:normal;color:#cecfd2;-webkit-text-stroke:0.45px currentColor;letter-spacing:-0.009px;">Test Failed:</div>
<svg class="ov" width="1690" height="1130" viewBox="0 0 1690 1130" fill="none" stroke="#b4b6ba" stroke-width="1" stroke-linecap="round" stroke-linejoin="round"><path d="M352.9 961 Q351.5 967 354.09999999999997 971.5" stroke="#c8321e" stroke-width="2.2"/><path d="M370.2 953.5 Q372.2 957 370.9 962" stroke="#c8321e" stroke-width="2.2"/><path d="M351.9 953.5 Q357.2 950.5 363.5 952.2 L363.3 959.5 Q361.7 965.8 357.5 965.2 Q352.5 963.5 351.9 953.5 Z" fill="#4a95e6" stroke="none"/><path d="M361.5 961.2 Q367.2 958.4 373.7 960.6 L373.09999999999997 967.6 Q371.2 974 366.9 973.8 Q362.09999999999997 972.5 361.5 961.2 Z" fill="#e39a4c" stroke="none"/><path d="M355.7 958.4 Q358.2 961 360.7 958.4" stroke="#1d3a66" stroke-width="1"/><path d="M364.9 970 Q367.3 968 369.9 970" stroke="#5a3214" stroke-width="1"/></svg>
<div class="t" style="left:379.50px;top:952.11px;font-size:23.5px;line-height:23.5px;font-weight:normal;color:#cecfd2;-webkit-text-stroke:0.45px currentColor;letter-spacing:0.110px;">CameraLux Events/Shows API Test</div>
<div style="position:absolute;left:1368px;top:950.0px;width:89px;height:25.8px;box-sizing:border-box;background:#dddee1;border-radius:4px"></div>
<div class="t" style="left:1375.20px;top:954.48px;font-size:18.1px;line-height:18.1px;font-weight:bold;color:#1d1e21;-webkit-text-stroke:0.1px currentColor;transform:scaleX(0.9614);transform-origin:0 0;">TO DO</div>
<svg class="ov" width="1690" height="1130" viewBox="0 0 1690 1130" fill="none" stroke="#1d1e21" stroke-width="2.6" stroke-linecap="round" stroke-linejoin="round"><path d="M1436 961.3 L1441.3 966.4 L1446.6 961.3"/></svg>
<div style="position:absolute;left:1560.3px;top:943.8px;width:38.4px;height:38.4px;box-sizing:border-box;background:#505258;border-radius:50%"></div>
<svg class="ov" width="1690" height="1130" viewBox="0 0 1690 1130" fill="none" stroke="#c2c4c8" stroke-width="2.6" stroke-linecap="round" stroke-linejoin="round"><circle cx="1579.3" cy="956.6" r="5"/><path d="M1570.7 973.6 V971.2 Q1570.7 966.4 1575.5 966.4 H1583.3 Q1588.1 966.4 1588.1 971.2 V973.6"/></svg>
<div style="position:absolute;left:34px;top:995px;width:1632px;height:1px;box-sizing:border-box;background:#3b3c40"></div>
<svg class="ov" width="1690" height="1130" viewBox="0 0 1690 1130" fill="none" stroke="#f0705e" stroke-width="2.0" stroke-linecap="round" stroke-linejoin="round"><path d="M93.4 1022.5 V1030 C93.4 1034.5 95.5 1036.6 98.2 1036.6 C100.9 1036.6 103 1034.5 103 1030 V1022.5 Z"/>
<path d="M93.6 1022.5 A4.6 4.6 0 0 1 102.8 1022.5"/>
<line x1="86.2" y1="1027" x2="93.4" y2="1027"/><line x1="103" y1="1027" x2="110.2" y2="1027"/>
<line x1="88.3" y1="1018.7" x2="92.6" y2="1022"/><line x1="108.1" y1="1018.7" x2="103.8" y2="1022"/>
<line x1="91.6" y1="1030.8" x2="88" y2="1036"/><line x1="104.8" y1="1030.8" x2="108.4" y2="1036"/></svg>
<div class="t" style="left:117.73px;top:1016.11px;font-size:23.5px;line-height:23.5px;font-weight:normal;color:#a9abaf;-webkit-text-stroke:0.45px currentColor;transform:scaleX(0.8677);transform-origin:0 0;">BR</div>
<div style="position:absolute;left:149px;top:1025.7px;width:8px;height:2.5px;box-sizing:border-box;background:#a9abaf"></div>
<div class="t" style="left:162.20px;top:1016.11px;font-size:23.5px;line-height:23.5px;font-weight:normal;color:#a9abaf;-webkit-text-stroke:0.45px currentColor;transform:scaleX(0.8769);transform-origin:0 0;">8</div>
<svg class="ov" width="1690" height="1130" viewBox="0 0 1690 1130" fill="none" stroke="#e2301f" stroke-width="4.3" stroke-linecap="butt"><line x1="195.7" y1="1016.5" x2="215.4" y2="1036.3"/><line x1="215.4" y1="1016.5" x2="195.7" y2="1036.3"/></svg>
<div class="t" style="left:224.30px;top:1016.11px;font-size:23.5px;line-height:23.5px;font-weight:normal;color:#cecfd2;-webkit-text-stroke:0.45px currentColor;letter-spacing:-0.009px;">Test Failed:</div>
<svg class="ov" width="1690" height="1130" viewBox="0 0 1690 1130" fill="none" stroke="#b4b6ba" stroke-width="1" stroke-linecap="round" stroke-linejoin="round"><rect x="351.5" y="1019.5" width="16.5" height="5" fill="#d4d6da" stroke="none"/><rect x="353.2" y="1024" width="15" height="13" fill="#a7aaae" stroke="none"/><rect x="351.5" y="1022.5" width="2.5" height="12" fill="#7d8086" stroke="none"/><circle cx="359.2" cy="1031" r="3.4" fill="#26282c" stroke="none"/><path d="M368.7 1020 L372.9 1017 L373.5 1034.5 L368.7 1033 Z" fill="#4b4e54" stroke="none"/><rect x="364.2" y="1026" width="1.6" height="1.6" fill="#d4b23c" stroke="none"/><rect x="364.2" y="1031" width="1.6" height="1.6" fill="#c73b3b" stroke="none"/></svg>
<div class="t" style="left:379.50px;top:1016.11px;font-size:23.5px;line-height:23.5px;font-weight:normal;color:#cecfd2;-webkit-text-stroke:0.45px currentColor;letter-spacing:0.134px;">CameraLux WebRTC Broadcast Test - Multi-Actor Scenario</div>
<div style="position:absolute;left:1368px;top:1014.0px;width:89px;height:25.8px;box-sizing:border-box;background:#dddee1;border-radius:4px"></div>
<div class="t" style="left:1375.20px;top:1018.48px;font-size:18.1px;line-height:18.1px;font-weight:bold;color:#1d1e21;-webkit-text-stroke:0.1px currentColor;transform:scaleX(0.9614);transform-origin:0 0;">TO DO</div>
<svg class="ov" width="1690" height="1130" viewBox="0 0 1690 1130" fill="none" stroke="#1d1e21" stroke-width="2.6" stroke-linecap="round" stroke-linejoin="round"><path d="M1436 1025.3 L1441.3 1030.3999999999999 L1446.6 1025.3"/></svg>
<div style="position:absolute;left:1560.3px;top:1007.8px;width:38.4px;height:38.4px;box-sizing:border-box;background:#505258;border-radius:50%"></div>
<svg class="ov" width="1690" height="1130" viewBox="0 0 1690 1130" fill="none" stroke="#c2c4c8" stroke-width="2.6" stroke-linecap="round" stroke-linejoin="round"><circle cx="1579.3" cy="1020.6" r="5"/><path d="M1570.7 1037.6 V1035.2 Q1570.7 1030.4 1575.5 1030.4 H1583.3 Q1588.1 1030.4 1588.1 1035.2 V1037.6"/></svg>
<div style="position:absolute;left:34px;top:1059px;width:1632px;height:1px;box-sizing:border-box;background:#3b3c40"></div>
<svg class="ov" width="1690" height="1130" viewBox="0 0 1690 1130" fill="none" stroke="#f0705e" stroke-width="2.0" stroke-linecap="round" stroke-linejoin="round"><path d="M93.4 1086.5 V1094 C93.4 1098.5 95.5 1100.6 98.2 1100.6 C100.9 1100.6 103 1098.5 103 1094 V1086.5 Z"/>
<path d="M93.6 1086.5 A4.6 4.6 0 0 1 102.8 1086.5"/>
<line x1="86.2" y1="1091" x2="93.4" y2="1091"/><line x1="103" y1="1091" x2="110.2" y2="1091"/>
<line x1="88.3" y1="1082.7" x2="92.6" y2="1086"/><line x1="108.1" y1="1082.7" x2="103.8" y2="1086"/>
<line x1="91.6" y1="1094.8" x2="88" y2="1100"/><line x1="104.8" y1="1094.8" x2="108.4" y2="1100"/></svg>
<div class="t" style="left:117.73px;top:1080.11px;font-size:23.5px;line-height:23.5px;font-weight:normal;color:#a9abaf;-webkit-text-stroke:0.45px currentColor;transform:scaleX(0.8677);transform-origin:0 0;">BR</div>
<div style="position:absolute;left:149px;top:1089.7px;width:8px;height:2.5px;box-sizing:border-box;background:#a9abaf"></div>
<div class="t" style="left:162.20px;top:1080.11px;font-size:23.5px;line-height:23.5px;font-weight:normal;color:#a9abaf;-webkit-text-stroke:0.45px currentColor;transform:scaleX(0.8769);transform-origin:0 0;">9</div>
<svg class="ov" width="1690" height="1130" viewBox="0 0 1690 1130" fill="none" stroke="#e2301f" stroke-width="4.3" stroke-linecap="butt"><line x1="195.7" y1="1080.5" x2="215.4" y2="1100.3"/><line x1="215.4" y1="1080.5" x2="195.7" y2="1100.3"/></svg>
<div class="t" style="left:224.30px;top:1080.11px;font-size:23.5px;line-height:23.5px;font-weight:normal;color:#cecfd2;-webkit-text-stroke:0.45px currentColor;letter-spacing:-0.009px;">Test Failed:</div>
<div class="t" style="left:350.50px;top:1080.11px;font-size:23.5px;line-height:23.5px;font-weight:normal;color:#cecfd2;-webkit-text-stroke:0.45px currentColor;letter-spacing:0.059px;">Group Chat Summary Test</div>
<div style="position:absolute;left:1368px;top:1078.8px;width:89px;height:25.8px;box-sizing:border-box;background:#dddee1;border-radius:4px"></div>
<div class="t" style="left:1375.20px;top:1083.28px;font-size:18.1px;line-height:18.1px;font-weight:bold;color:#1d1e21;-webkit-text-stroke:0.1px currentColor;transform:scaleX(0.9614);transform-origin:0 0;">TO DO</div>
<svg class="ov" width="1690" height="1130" viewBox="0 0 1690 1130" fill="none" stroke="#1d1e21" stroke-width="1.9" stroke-linecap="round" stroke-linejoin="round"><path d="M1433.6 1088.8 L1440.6 1095.3999999999999 L1447.6 1088.8"/></svg>
<div style="position:absolute;left:1560.3px;top:1071.8px;width:38.4px;height:38.4px;box-sizing:border-box;background:#505258;border-radius:50%"></div>
<svg class="ov" width="1690" height="1130" viewBox="0 0 1690 1130" fill="none" stroke="#c2c4c8" stroke-width="2.6" stroke-linecap="round" stroke-linejoin="round"><circle cx="1579.3" cy="1084.6" r="5"/><path d="M1570.7 1101.6 V1099.2 Q1570.7 1094.4 1575.5 1094.4 H1583.3 Q1588.1 1094.4 1588.1 1099.2 V1101.6"/></svg>
<div style="position:absolute;left:34px;top:1123px;width:1632px;height:10px;box-sizing:border-box;background:#1c2740;border-top:1px solid #3c4a66"></div>
</body></html>
